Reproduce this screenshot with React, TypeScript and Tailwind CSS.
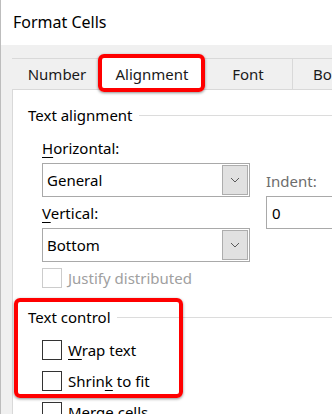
import React from "react";

const font = { fontFamily: '"Noto Sans", "Open Sans", sans-serif' };

function Chevron() {
  return (
    <svg width="10" height="6" viewBox="0 0 10 6" fill="none">
      <path d="M1 1 L5 5 L9 1" stroke="#5a5a5a" strokeWidth="1" />
    </svg>
  );
}

function Select({ value }: { value: string }) {
  return (
    <div className="flex h-[34px] w-[208px] items-center border border-[#a9a9a9] bg-white">
      <span className="flex-1 pl-[4px] text-[15px] leading-[20px] text-black">{value}</span>
      <div className="mr-[1px] flex h-[30px] w-[26px] items-center justify-center border border-[#adadad] bg-[#e1e1e1]">
        <Chevron />
      </div>
    </div>
  );
}

function Check({ label, disabled }: { label: React.ReactNode; disabled?: boolean }) {
  return (
    <div className="flex h-[20px] items-center gap-[6px]">
      <div
        className={
          disabled
            ? "h-[20px] w-[20px] border border-[#cccccc] bg-white"
            : "h-[20px] w-[20px] border border-[#333333] bg-white"
        }
      />
      <span className={disabled ? "text-[15px] leading-[20px] text-[#a0a0a0]" : "text-[15px] leading-[20px] text-black"}>
        {label}
      </span>
    </div>
  );
}

function GroupTitle({ title }: { title: string }) {
  return (
    <div className="flex items-center gap-[6px] pl-[15px]">
      <span className="text-[15px] leading-[20px] text-black">{title}</span>
      <div className="h-px flex-1 bg-[#dcdcdc]" />
    </div>
  );
}

export default function App() {
  return (
    <div className="relative h-[414px] w-[332px] overflow-hidden border-l border-[#bdbdbd] bg-[#f0f0f0]" style={font}>
      <div className="h-[45px] bg-white pl-[12px] pt-[11px] text-[16px] leading-[22px] text-black">Format Cells</div>

      <div className="pl-[11px] pt-[13px]">
        {/* tab strip */}
        <div className="flex h-[31px] items-stretch border-t border-[#d9d9d9] text-[15px] leading-[20px] text-[#1a1a1a]">
          <div className="flex w-[88px] shrink-0 items-center justify-center pl-[2px]">Number</div>
          <div className="-mt-[3px] flex w-[104px] shrink-0 items-center justify-center bg-white pt-[3px]">Alignment</div>
          <div className="flex w-[89px] shrink-0 items-center justify-center border-r border-[#d9d9d9]">Font</div>
          <div className="flex shrink-0 items-center whitespace-nowrap pl-[20px]">Border</div>
        </div>

        {/* panel */}
        <div className="h-[400px] border-l border-t border-[#d9d9d9] bg-white pt-[15px]">
          <GroupTitle title="Text alignment" />

          <div className="flex gap-[16px] pl-[29px] pt-[13px]">
            <div className="flex flex-col">
              <span className="text-[15px] leading-[20px] text-black">
                <span className="underline decoration-1 underline-offset-[3px]">H</span>orizontal:
              </span>
              <div className="mt-[5px]">
                <Select value="General" />
              </div>
              <span className="mt-[6px] text-[15px] leading-[20px] text-black">
                <span className="underline decoration-1 underline-offset-[3px]">V</span>ertical:
              </span>
              <div className="mt-[5px]">
                <Select value="Bottom" />
              </div>
            </div>
            <div className="-mr-[30px] flex flex-1 flex-col pt-[33px]">
              <span className="text-[15px] leading-[20px] text-[#6d6d6d]">Indent:</span>
              <div className="mt-[5px] flex h-[33px] items-center border border-[#a9a9a9] bg-white pl-[5px] text-[15px] leading-[20px] text-black">
                0
              </div>
            </div>
          </div>

          <div className="pl-[29px] pt-[6px]">
            <Check label="Justify distributed" disabled />
          </div>

          <div className="pt-[19px]">
            <GroupTitle title="Text control" />
          </div>

          <div className="flex flex-col gap-[11px] pl-[29px] pt-[13px]">
            <Check
              label={
                <>
                  <span className="underline decoration-1 underline-offset-[3px]">W</span>rap text
                </>
              }
            />
            <Check
              label={
                <>
                  Shrin<span className="underline decoration-1 underline-offset-[3px]">k</span> to fit
                </>
              }
            />
            <Check label="Merge cells" />
          </div>
        </div>
      </div>

      {/* red highlight boxes */}
      <div className="absolute left-[97px] top-[54px] h-[38px] w-[107px] rounded-[6px] border-[4px] border-[#ff0000] shadow-[0_1px_3px_rgba(0,0,0,0.45)]" />
      <div className="absolute left-[13px] top-[298px] h-[100px] w-[169px] rounded-[6px] border-[4px] border-[#ff0000] shadow-[0_1px_3px_rgba(0,0,0,0.45)]" />
    </div>
  );
}
